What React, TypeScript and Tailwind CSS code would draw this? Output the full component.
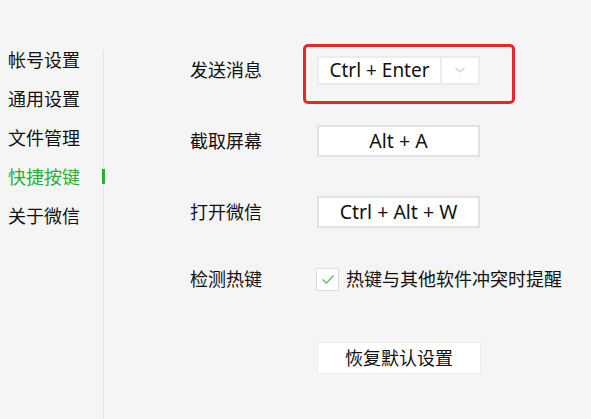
import React from "react";

const font = { fontFamily: '"Noto Sans", "Noto Sans CJK SC", sans-serif' };

function KeyBox({ text }: { text: string }) {
  return (
    <div className="w-[163px] h-[32px] bg-white border-2 border-[#e2e2e2] flex items-center justify-center text-[19.5px] text-[#111]">
      {text}
    </div>
  );
}

export default function App() {
  const menu = ["帐号设置", "通用设置", "文件管理", "快捷按键", "关于微信"];
  return (
    <div className="w-[591px] h-[419px] bg-[#f5f5f5] flex overflow-hidden" style={font}>
      <div className="w-[103px] shrink-0 flex flex-col pt-[41px] pl-[8px]">
        {menu.map((m, i) => (
          <div
            key={m}
            className={`h-[39px] flex items-center text-[18px] ${i === 3 ? "text-[#2aae36]" : "text-[#111]"}`}
          >
            {m}
          </div>
        ))}
      </div>
      <div className="w-px shrink-0 mt-[50px] bg-[#e4e4e4] relative">
        <div className="absolute left-[-1px] top-[119px] w-[3px] h-[15px] bg-[#2aae36]" />
      </div>
      <div className="flex-1 flex flex-col pl-[86px] text-[18px] text-[#111]">
        <div className="relative mt-[52px] h-[36px] flex items-center">
          <div className="w-[127px]">发送消息</div>
          <div className="w-[163px] h-[29px] bg-white border-2 border-[#ececec] flex items-center">
            <div className="flex-1 h-full flex items-center justify-center border-r-2 border-[#ececec] text-[19px]">Ctrl + Enter</div>
            <div className="w-[36px] h-full flex items-center justify-center">
              <svg width="12" height="8" viewBox="0 0 12 8">
                <path d="M1.5 2 L6 6 L10.5 2" fill="none" stroke="#cfcfcf" strokeWidth="1.3" />
              </svg>
            </div>
          </div>
          <div className="absolute left-[113px] top-[-8px] w-[212px] h-[60px] border-[3px] border-[#e8262a] rounded-[5px]" />
        </div>
        <div className="mt-[35px] h-[36px] flex items-center">
          <div className="w-[127px]">截取屏幕</div>
          <KeyBox text="Alt + A" />
        </div>
        <div className="mt-[35px] h-[36px] flex items-center">
          <div className="w-[127px]">打开微信</div>
          <KeyBox text="Ctrl + Alt + W" />
        </div>
        <div className="mt-[31px] h-[36px] flex items-center">
          <div className="w-[126px]">检测热键</div>
          <div className="w-[23px] h-[23px] bg-white border border-[#dcdcdc] flex items-center justify-center">
            <svg width="14" height="11" viewBox="0 0 14 11">
              <path d="M1.5 5.5 L5.5 9 L12.5 1.5" fill="none" stroke="#5bbf5b" strokeWidth="1.4" />
            </svg>
          </div>
          <div className="ml-[7px]">热键与其他软件冲突时提醒</div>
        </div>
        <div className="mt-[43px] h-[36px] flex items-center">
          <div className="w-[127px]" />
          <div className="w-[164px] h-[32px] bg-white border border-[#ececec] flex items-center justify-center">恢复默认设置</div>
        </div>
      </div>
    </div>
  );
}
